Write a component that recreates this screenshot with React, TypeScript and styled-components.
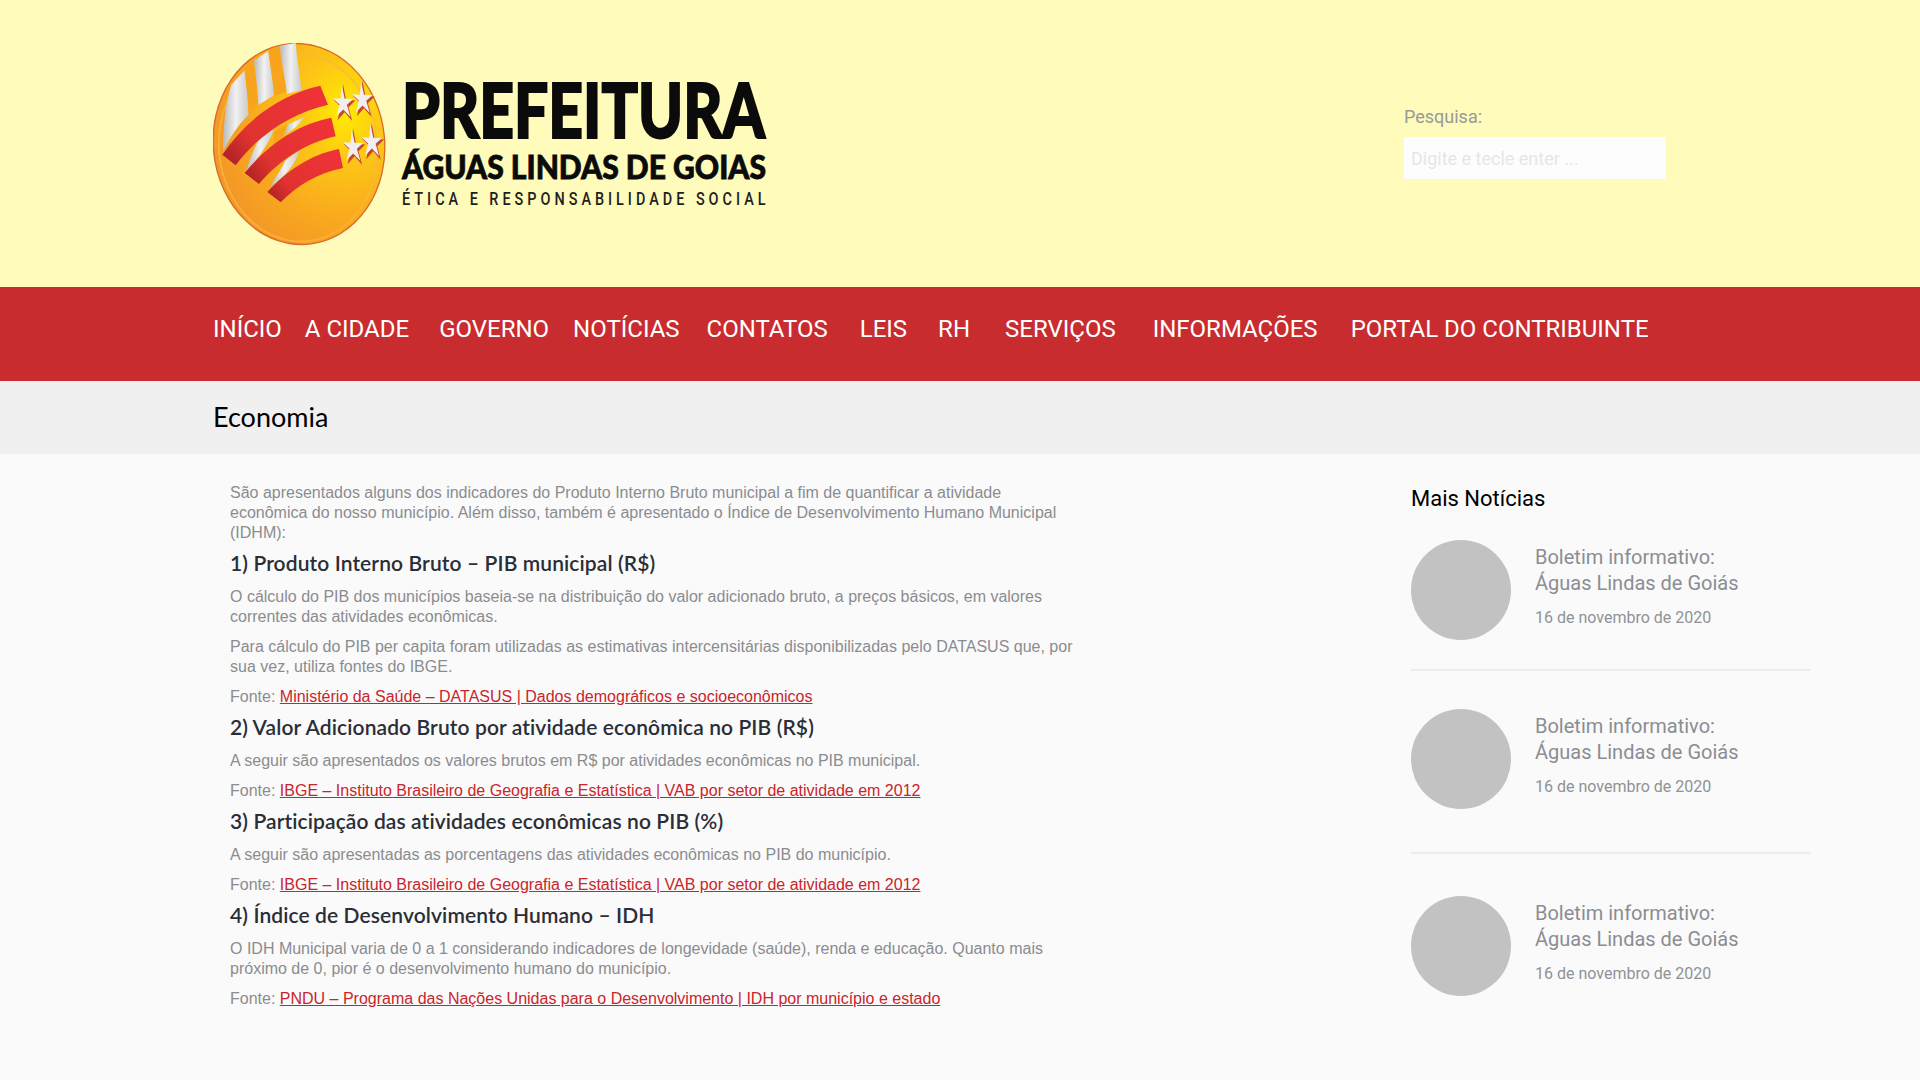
import React from 'react';
import styled, { createGlobalStyle } from 'styled-components';

const Global = createGlobalStyle`
  html, body { margin: 0; padding: 0; background: #fafafa; }
  body { font-family: Roboto, "Liberation Sans", sans-serif; }
`;

const Page = styled.div`
  width: 1920px;
  height: 1080px;
  overflow: hidden;
  background: #fafafa;
`;
const Header = styled.header`
  height: 287px;
  background: #fefbbb;
  box-sizing: border-box;
  padding: 43px 0 0 213px;
  display: flex;
  align-items: flex-start;
`;
const LogoArt = styled.svg`
  width: 570px;
  height: 205px;
  display: block;
  flex: none;
`;
const SearchBox = styled.div`
  margin: 63px 0 0 621px;
  display: flex;
  flex-direction: column;
`;
const SearchLabel = styled.label`
  font: 400 18px/22px Roboto, sans-serif;
  color: #979a9c;
  margin-bottom: 9px;
`;
const SearchInput = styled.input`
  width: 262px;
  height: 42px;
  box-sizing: border-box;
  border: 0;
  outline: 0;
  padding: 0 7px;
  background: #fdfdfd;
  font: 400 18px Roboto, sans-serif;
  &::placeholder { color: #e6e6e6; opacity: 1; }
`;
const Nav = styled.nav`
  height: 94px;
  background: #c92c2f;
  box-sizing: border-box;
  padding: 28px 0 0 213px;
  display: flex;
  align-items: flex-start;
`;
const NavItem = styled.a<{ $gap: number }>`
  font: 400 24px/28px Roboto, sans-serif;
  color: #fff;
  margin-right: ${p => p.$gap}px;
  white-space: nowrap;
`;
const TitleBar = styled.div`
  height: 73px;
  background: #f0f0f0;
  box-sizing: border-box;
  padding: 0 0 1px 213px;
  display: flex;
  align-items: center;
`;
const PageTitle = styled.h1`
  margin: 0;
  font: 400 27px/32px Lato, sans-serif;
  color: #000;
`;
const Body = styled.div`
  display: flex;
  align-items: flex-start;
  padding-left: 230px;
`;
const Article = styled.article`
  width: 851px;
  padding-top: 29px;
  flex: none;
`;
const Para = styled.p`
  margin: 0 0 10px;
  font: 400 16px/20px "Liberation Sans", Arial, sans-serif;
  color: #8a8c90;
`;
const Heading = styled.h2`
  margin: 0 0 14px;
  font: 600 21px/20px Lato, sans-serif;
  letter-spacing: 0.1px;
  color: #2a2e36;
`;
const SourceLink = styled.a`
  color: #c9252b;
  text-decoration: underline;
`;
const Aside = styled.aside`
  width: 400px;
  margin-left: 330px;
  padding-top: 32px;
  flex: none;
`;
const AsideTitle = styled.h3`
  margin: 0 0 28px;
  font: 400 22px/26px Roboto, sans-serif;
  color: #000;
`;
const NewsItem = styled.div`
  display: flex;
  align-items: flex-start;
  gap: 24px;
`;
const Thumb = styled.div`
  width: 100px;
  height: 100px;
  border-radius: 50%;
  background: #c2c2c2;
  flex: none;
`;
const NewsText = styled.div`
  padding-top: 4px;
`;
const NewsTitle = styled.div`
  font: 400 20px/26px Roboto, sans-serif;
  color: #8a8d93;
`;
const NewsDate = styled.div`
  font: 400 16px/20px Roboto, sans-serif;
  color: #8f9296;
  margin-top: 12px;
`;
const Divider = styled.hr<{ $above: number; $below: number }>`
  border: 0;
  height: 2px;
  background: #ececec;
  margin: ${p => p.$above}px 0 ${p => p.$below}px;
`;

/* A tall five-pointed star: long vertical spike, long legs. */
const starPoints = (cx: number, cy: number, w: number, h: number) => {
  const raw: [number, number][] = [
    [-0.12, -1.35], [0.16, -0.32], [1, -0.3], [0.38, 0.14], [0.72, 1.05],
    [0.02, 0.48], [-0.62, 1.0], [-0.34, 0.12], [-1, -0.36], [-0.24, -0.32],
  ];
  return raw.map(([x, y]) => `${cx + x * w},${cy + y * h}`).join(' ');
};

const Star = ({ x, y }: { x: number; y: number }) => (
  <g>
    <polygon points={starPoints(x + 4, y + 6, 33, 46)} fill="#c8452e" />
    <polygon points={starPoints(x, y, 31, 40)} fill="#f1efee" />
  </g>
);

const Emblem = () => (
  <g transform="scale(0.33333) translate(-40 -40)">
    <ellipse cx="298" cy="343" rx="257" ry="302" transform="rotate(-6 298 343)" fill="url(#ball)" stroke="#d76a2b" strokeWidth="4" />
    <ellipse cx="296" cy="352" rx="238" ry="284" transform="rotate(-6 296 352)" fill="none" stroke="#fbb63a" strokeWidth="6" opacity="0.7" />
    <path d="M95 165 L135 122 C140 170 146 210 147 255 C115 285 90 325 70 366 C70 290 78 220 95 165 Z" fill="url(#silver)" />
    <path d="M135 122 L163 93 C168 140 174 180 176 222 L147 255 C146 210 140 170 135 122 Z" fill="#f8a51c" />
    <path d="M163 93 L206 63 C212 110 220 150 224 196 L176 226 C174 180 168 140 163 93 Z" fill="url(#silver)" />
    <path d="M206 63 L240 48 C245 95 255 140 262 186 L224 200 C220 150 212 110 206 63 Z" fill="#f8a51c" />
    <path d="M240 48 L288 40 C292 90 300 135 306 182 L262 192 C255 140 245 95 240 48 Z" fill="url(#silver)" />
    <path d="M176 330 L224 298 C212 330 190 370 140 425 C146 395 162 365 176 330 Z" fill="url(#silver)" />
    <path d="M224 305 L264 282 L250 320 L222 345 Z" fill="#f8a51c" />
    <path d="M264 285 L314 262 C300 285 280 300 256 316 Z" fill="url(#silver)" />
    <path d="M258 392 L300 362 C285 410 255 440 212 472 C225 445 242 425 258 392 Z" fill="url(#silver)" />
    <path d="M68 375 C140 270 240 195 362 168 L385 225 C280 250 180 310 108 407 Z" fill="url(#band)" />
    <path d="M135 430 C205 345 290 285 395 264 L408 320 C320 340 240 390 178 463 Z" fill="url(#band)" />
    <path d="M203 487 C260 425 330 375 418 358 L430 415 C355 430 295 465 243 518 Z" fill="url(#band)" />
    <Star x={430} y={220} />
    <Star x={488} y={208} />
    <Star x={460} y={352} />
    <Star x={516} y={337} />
  </g>
);

const Logo = () => (
  <LogoArt viewBox="0 0 570 205" role="img" aria-label="Prefeitura Águas Lindas de Goias">
    <defs>
      <radialGradient id="ball" cx="0.78" cy="0.36" r="0.85">
        <stop offset="0" stopColor="#ffec00" />
        <stop offset="0.28" stopColor="#fdc815" />
        <stop offset="0.65" stopColor="#f9a81e" />
        <stop offset="1" stopColor="#f0932a" />
      </radialGradient>
      <linearGradient id="band" x1="0" y1="1" x2="1" y2="0.4">
        <stop offset="0" stopColor="#a41f24" />
        <stop offset="0.35" stopColor="#e0332f" />
        <stop offset="1" stopColor="#ee3237" />
      </linearGradient>
      <linearGradient id="silver" x1="0" y1="0" x2="1" y2="0">
        <stop offset="0" stopColor="#b9b9b9" />
        <stop offset="0.5" stopColor="#f2f2f2" />
        <stop offset="1" stopColor="#c9c9c9" />
      </linearGradient>
    </defs>
    <Emblem />
    <text x="189" y="94.7" textLength="363" lengthAdjust="spacingAndGlyphs" fontFamily="Lato, sans-serif" fontWeight="900" fontSize="76" fill="#0b0b0b" stroke="#0b0b0b" strokeWidth="2">PREFEITURA</text>
    <text x="189" y="135.7" textLength="364" lengthAdjust="spacingAndGlyphs" fontFamily="Lato, sans-serif" fontWeight="900" fontSize="33" fill="#0b0b0b" stroke="#0b0b0b" strokeWidth="0.8">ÁGUAS LINDAS DE GOIAS</text>
    <g transform="translate(189 162.3) scale(0.78 1)">
      <text x="0" y="0" textLength="466" lengthAdjust="spacing" fontFamily="Roboto, sans-serif" fontWeight="500" fontSize="18.5" fill="#1f1f1f">ÉTICA E RESPONSABILIDADE SOCIAL</text>
    </g>
  </LogoArt>
);

const navItems: [string, number][] = [
  ['INÍCIO', 23], ['A CIDADE', 30], ['GOVERNO', 24], ['NOTÍCIAS', 27], ['CONTATOS', 32],
  ['LEIS', 31], ['RH', 35], ['SERVIÇOS', 37], ['INFORMAÇÕES', 33], ['PORTAL DO CONTRIBUINTE', 0],
];

const IBGE = 'IBGE – Instituto Brasileiro de Geografia e Estatística | VAB por setor de atividade em 2012';

const News = () => (
  <NewsItem>
    <Thumb />
    <NewsText>
      <NewsTitle>Boletim informativo:<br />Águas Lindas de Goiás</NewsTitle>
      <NewsDate>16 de novembro de 2020</NewsDate>
    </NewsText>
  </NewsItem>
);

export default function App() {
  return (
    <Page>
      <Global />
      <Header>
        <Logo />
        <SearchBox>
          <SearchLabel>Pesquisa:</SearchLabel>
          <SearchInput placeholder="Digite e tecle enter ..." />
        </SearchBox>
      </Header>
      <Nav>
        {navItems.map(([t, g]) => <NavItem key={t} $gap={g}>{t}</NavItem>)}
      </Nav>
      <TitleBar><PageTitle>Economia</PageTitle></TitleBar>
      <Body>
        <Article>
          <Para>São apresentados alguns dos indicadores do Produto Interno Bruto municipal a fim de quantificar a atividade econômica do nosso município. Além disso, também é apresentado o Índice de Desenvolvimento Humano Municipal (IDHM):</Para>
          <Heading>1) Produto Interno Bruto – PIB municipal (R$)</Heading>
          <Para>O cálculo do PIB dos municípios baseia-se na distribuição do valor adicionado bruto, a preços básicos, em valores correntes das atividades econômicas.</Para>
          <Para>Para cálculo do PIB per capita foram utilizadas as estimativas intercensitárias disponibilizadas pelo DATASUS que, por sua vez, utiliza fontes do IBGE.</Para>
          <Para>Fonte: <SourceLink>Ministério da Saúde – DATASUS | Dados demográficos e socioeconômicos</SourceLink></Para>
          <Heading>2) Valor Adicionado Bruto por atividade econômica no PIB (R$)</Heading>
          <Para>A seguir são apresentados os valores brutos em R$ por atividades econômicas no PIB municipal.</Para>
          <Para>Fonte: <SourceLink>{IBGE}</SourceLink></Para>
          <Heading>3) Participação das atividades econômicas no PIB (%)</Heading>
          <Para>A seguir são apresentadas as porcentagens das atividades econômicas no PIB do município.</Para>
          <Para>Fonte: <SourceLink>{IBGE}</SourceLink></Para>
          <Heading>4) Índice de Desenvolvimento Humano – IDH</Heading>
          <Para>O IDH Municipal varia de 0 a 1 considerando indicadores de longevidade (saúde), renda e educação. Quanto mais próximo de 0, pior é o desenvolvimento humano do município.</Para>
          <Para>Fonte: <SourceLink>PNDU – Programa das Nações Unidas para o Desenvolvimento | IDH por município e estado</SourceLink></Para>
        </Article>
        <Aside>
          <AsideTitle>Mais Notícias</AsideTitle>
          <News />
          <Divider $above={29} $below={38} />
          <News />
          <Divider $above={43} $below={42} />
          <News />
        </Aside>
      </Body>
    </Page>
  );
}
